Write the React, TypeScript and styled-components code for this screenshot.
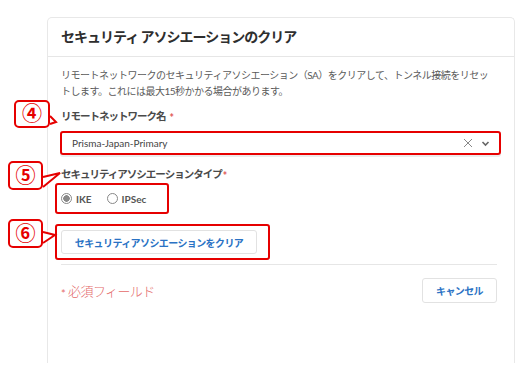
import styled, { createGlobalStyle } from 'styled-components';

const GlobalStyle = createGlobalStyle`
  body {
    margin: 0;
    background: #fff;
    font-family: Lato, "Noto Sans CJK JP", sans-serif;
  }
`;

const Page = styled.div`
  position: relative;
  width: 529px;
  height: 372px;
  padding: 17px 0 0 47px;
  box-sizing: border-box;
  overflow: hidden;
`;

const Panel = styled.section`
  width: 468px;
  height: 346px;
  box-sizing: border-box;
  border: 1px solid #e8e8e8;
  border-bottom: none;
  border-radius: 5px 5px 0 0;
`;

const Header = styled.header`
  display: flex;
  align-items: center;
  height: 39px;
  box-sizing: border-box;
  padding: 0 13px 2px;
  border-bottom: 1px solid #e6e6e6;

  h2 {
    margin: 0;
    font-size: 14px;
    font-weight: 700;
    letter-spacing: -1px;
    color: #2e2e2e;
  }
`;

const Body = styled.div`
  padding: 10px 17px 0 13px;
`;

const Description = styled.p`
  margin: 0;
  font-size: 10px;
  line-height: 16px;
  letter-spacing: -0.5px;
  color: #5a5a5a;
`;

const Star = styled.span<{ $gap?: number }>`
  position: relative;
  top: 2px;
  margin-left: ${(p) => p.$gap ?? 4}px;
  color: #e05555;
`;

const Label = styled.div<{ $top: number }>`
  margin-top: ${(p) => p.$top}px;
  font-size: 10.5px;
  line-height: 15px;
  font-weight: 700;
  letter-spacing: -1px;
  color: #4a4a4a;
`;

const Select = styled.div`
  display: flex;
  align-items: center;
  width: 441px;
  height: 24px;
  margin: 7px 0 0 -1px;
  padding: 0 9px 0 10px;
  box-sizing: border-box;
  border: 2px solid #e60000;
  border-radius: 3px;
  box-shadow: 0 2px 0 #ececec;
  font-size: 10px;
  font-weight: 400;
  color: #444;

  .value {
    flex: 1;
  }

  svg {
    margin-left: 8px;
  }
`;

const Highlight = styled.div<{ $w: number; $h: number; $top: number }>`
  display: flex;
  align-items: center;
  width: ${(p) => p.$w}px;
  height: ${(p) => p.$h}px;
  margin: ${(p) => p.$top}px 0 0 -6px;
  padding-left: 4px;
  box-sizing: border-box;
  border: 2px solid #e60000;
  border-radius: 3px;
`;

const Radio = styled.label<{ $checked?: boolean }>`
  display: flex;
  align-items: center;
  margin-right: 15px;
  font-size: 10px;
  font-weight: 700;
  color: #555;

  i {
    display: inline-block;
    width: 11px;
    height: 11px;
    margin-right: 4px;
    box-sizing: border-box;
    border-radius: 50%;
    border: 1px solid #888;
    background: ${(p) => (p.$checked ? 'radial-gradient(circle, #888 0 3px, #fff 3.5px)' : '#fff')};
  }
`;

const Button = styled.button<{ $w: number; $h?: number }>`
  width: ${(p) => p.$w}px;
  height: ${(p) => p.$h ?? 24}px;
  padding: 0;
  background: #fff;
  border: 1px solid #e2e2e2;
  border-radius: 3px;
  font-family: Lato, "Noto Sans CJK JP", sans-serif;
  font-size: 10px;
  font-weight: 700;
  letter-spacing: -0.6px;
  color: #2a72c4;
`;

const Divider = styled.hr`
  margin: 4px 0 0;
  border: none;
  border-top: 1px solid #e6e6e6;
`;

const Footer = styled.div`
  display: flex;
  align-items: center;
  justify-content: space-between;
  padding-top: 13px;
`;

const Required = styled.span`
  font-size: 13px;
  font-weight: 300;
  letter-spacing: -0.6px;
  color: #e46a6a;

  b {
    position: relative;
    top: 2px;
    font-weight: 400;
    font-size: 11px;
    margin-right: 3px;
  }
`;

const Callout = styled.svg<{ $x: number; $y: number }>`
  position: absolute;
  left: ${(p) => p.$x}px;
  top: ${(p) => p.$y}px;
  overflow: visible;

  text {
    font-family: "Noto Sans CJK JP", sans-serif;
    font-size: 20px;
    font-weight: 700;
    fill: #e60000;
  }
`;

type Bubble = { x: number; y: number; w: number; h: number; tail: string; n: string };

const bubbles: Bubble[] = [
  { x: 14, y: 100, w: 36, h: 28, tail: 'M36 16 L42 22 L36 24', n: '④' },
  { x: 8, y: 161, w: 35, h: 29, tail: 'M35 16 L52 12 L35 26', n: '⑤' },
  { x: 8, y: 219, w: 35, h: 29, tail: 'M35 13 L47 16 L35 24', n: '⑥' },
];

const App = () => (
  <Page>
    <GlobalStyle />
    <Panel>
      <Header>
        <h2>セキュリティ アソシエーションのクリア</h2>
      </Header>
      <Body>
        <Description>
          リモートネットワークのセキュリティアソシエーション（SA）をクリアして、トンネル接続をリセットします。これには最大15秒かかる場合があります。
        </Description>
        <Label $top={10}>
          リモートネットワーク名<Star>*</Star>
        </Label>
        <Select>
          <span className="value">Prisma-Japan-Primary</span>
          <svg width="10" height="10" viewBox="0 0 10 10">
            <path d="M1 1 L9 9 M9 1 L1 9" stroke="#888" strokeWidth="1" />
          </svg>
          <svg width="9" height="9" viewBox="0 0 9 9">
            <path d="M1.5 3 L4.5 6 L7.5 3" stroke="#666" strokeWidth="1.6" fill="none" />
          </svg>
        </Select>
        <Label $top={12}>
          セキュリティアソシエーションタイプ<Star $gap={1}>*</Star>
        </Label>
        <Highlight $w={114} $h={31} $top={1}>
          <Radio $checked>
            <i />
            IKE
          </Radio>
          <Radio>
            <i />
            IPSec
          </Radio>
        </Highlight>
        <Highlight $w={215} $h={36} $top={10}>
          <Button $w={196}>セキュリティアソシエーションをクリア</Button>
        </Highlight>
        <Divider />
        <Footer>
          <Required>
            <b>*</b>必須フィールド
          </Required>
          <Button $w={75} $h={25}>
            キャンセル
          </Button>
        </Footer>
      </Body>
    </Panel>
    {bubbles.map((b) => (
      <Callout key={b.n} $x={b.x} $y={b.y} width={b.w} height={b.h} viewBox={`0 0 ${b.w} ${b.h}`}>
        <rect x="1" y="1" width={b.w - 2} height={b.h - 2} rx="4" fill="#fff" stroke="#e60000" strokeWidth="2" />
        <path d={b.tail} fill="#fff" stroke="#e60000" strokeWidth="2" strokeLinejoin="miter" />
        <text x={b.w / 2} y={b.h / 2 + 7} textAnchor="middle">
          {b.n}
        </text>
      </Callout>
    ))}
  </Page>
);

export default App;
